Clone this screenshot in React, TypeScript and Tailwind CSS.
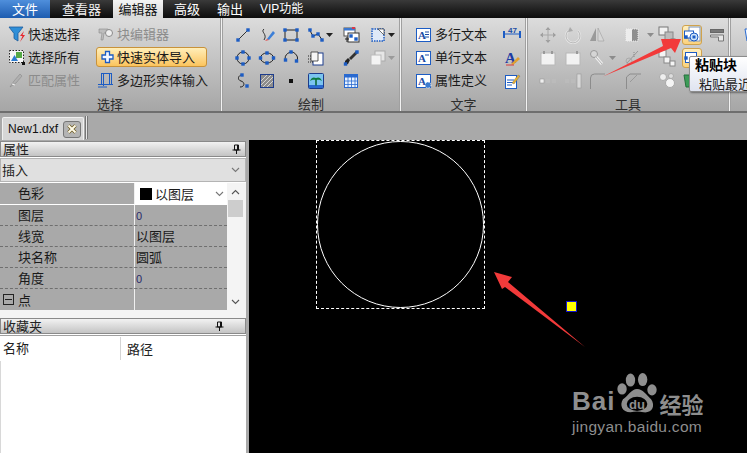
import type { ReactNode } from "react";

const BLUE = "#1c5cc4";

function Ic({ children, w = 18 }: { children?: ReactNode; w?: number }) {
  return (
    <svg width={w} height={18} viewBox={`0 0 ${w} 18`} className="shrink-0">
      {children}
    </svg>
  );
}

function H({ x, y, s = 3.4 }: { x: number; y: number; s?: number }) {
  return <rect x={x - s / 2} y={y - s / 2} width={s} height={s} fill={BLUE} />;
}

function Caret({ color = "#222" }: { color?: string }) {
  return (
    <svg width={7} height={4} viewBox="0 0 7 4" className="shrink-0">
      <path d="M0 0h7L3.500 4z" fill={color} />
    </svg>
  );
}

const gray = "#e6e6e6";
const grayD = "#8a8a8a";

function RibbonLabel({ children }: { children: ReactNode }) {
  return (
    <div className="h-[15px] shrink-0 text-center text-[13px] leading-[15px] text-[#2e2e2e]">
      {children}
    </div>
  );
}

function Separator() {
  return <div className="w-[3px] shrink-0 self-stretch border-x border-[#a0a0a0] bg-[#f2f2f2]" />;
}

function SelectItem({
  icon,
  label,
  dim,
  active,
}: {
  icon: ReactNode;
  label: string;
  dim?: boolean;
  active?: boolean;
}) {
  return (
    <div
      className={
        active
          ? "flex h-[20px] items-center whitespace-nowrap rounded-[3px] border border-[#c8923a] bg-gradient-to-b from-[#ffeeb8] to-[#fbc45c] pl-[2px] text-[13px] text-[#1a1a1a]"
          : "flex h-[20px] items-center whitespace-nowrap pl-[1px] text-[13px] " +
            (dim ? "text-[#8c8c8c]" : "text-[#1a1a1a]")
      }
    >
      {icon}
      <span className={active ? "" : "ml-[2px]"}>{label}</span>
    </div>
  );
}

function SelectGroup() {
  return (
    <div className="flex w-[220px] shrink-0 flex-col pt-[6px]">
      <div className="grid h-[72px] shrink-0 grid-cols-[89px_111px] content-start gap-y-[3px] pl-[7px]">
        <SelectItem
          label="快速选择"
          icon={
            <Ic>
              <path d="M1 2h14l-5 6.500V16l-4-2.500V8.500z" fill="#2f8fd8" stroke="#1c5c9c" strokeWidth=".8" />
              <path d="M16 6l-4 5h2.500L12 17l5-7h-2.500z" fill="#e8252c" />
            </Ic>
          }
        />
        <SelectItem
          dim
          label="块编辑器"
          icon={
            <Ic>
              <path d="M2 4h9v4H7l-1 7H4l1-7H2z" fill="#bdbdbd" stroke={grayD} strokeWidth=".6" />
              <circle cx="12" cy="8" r="3.500" fill="#efefef" stroke={grayD} />
            </Ic>
          }
        />
        <SelectItem
          label="选择所有"
          icon={
            <Ic>
              <rect x="1.500" y="2.500" width="14" height="12" fill="#f6f6f6" stroke="#222" strokeDasharray="1.500 1.500" />
              <rect x="8" y="4" width="6" height="6" fill="#55a845" />
              <path d="M3 13l3.500-6 3.500 6z" fill="#2b7bd0" />
              <rect x="14" y="14" width="3" height="3" fill="#111" />
            </Ic>
          }
        />
        <SelectItem
          active
          label="快速实体导入"
          icon={
            <Ic>
              <path d="M6.500 3.500h4v3.500H14v4h-3.500V14.500h-4V11H3V7h3.500z" fill="#f5f8ff" stroke={BLUE} strokeWidth="1.300" />
            </Ic>
          }
        />
        <SelectItem
          dim
          label="匹配属性"
          icon={
            <Ic>
              <path d="M2 16l4-6 6-7 2 2-6 7z" fill="#b0b0b0" stroke={grayD} strokeWidth=".6" />
              <path d="M4 13l3 1" stroke="#eee" />
            </Ic>
          }
        />
        <SelectItem
          label="多边形实体输入"
          icon={
            <Ic>
              <rect x="4.500" y="2.500" width="10" height="11" fill="none" stroke={BLUE} />
              <path d="M1 13.500h15M1 16h9M6.500 2v13M12.500 2v11" stroke={BLUE} />
            </Ic>
          }
        />
      </div>
      <RibbonLabel>选择</RibbonLabel>
    </div>
  );
}

const drawIcons: ReactNode[] = [
  <Ic key="a"><path d="M4 14L14 4" stroke="#333" /><H x={4} y={14} /><H x={14} y={4} /></Ic>,
  <Ic key="b"><path d="M6 3c-4 3 4 5 0 11" fill="none" stroke="#333" /><path d="M9 13l6-8 2 2-6 7z" fill="#3c7fd8" /><path d="M7 15l2-2 2 1z" fill="#e04848" /></Ic>,
  <Ic key="c"><rect x="3" y="4" width="12" height="10" fill="none" stroke="#222" /><H x={3} y={4} /><H x={15} y={4} /><H x={3} y={14} /><H x={15} y={14} /></Ic>,
  <div key="d" className="flex items-center gap-[1px]"><Ic><path d="M2 3l4 7 5-2 5 7" fill="none" stroke="#222" /><H x={3} y={4} /><H x={6} y={10} /><H x={11} y={8} /><H x={15} y={14} /></Ic><Caret /></div>,
  <Ic key="e"><rect x="2" y="2" width="11" height="8" fill="#fff" stroke="#555" /><rect x="2" y="2" width="11" height="2.500" fill="#3c78d0" /><rect x="10" y="1" width="3" height="2" fill="#d8394a" /><rect x="6" y="7" width="11" height="9" fill="#fff" stroke="#333" /><H x={9} y={10} /><H x={14} y={13} /><path d="M3 13h4M5 11v5" stroke="#222" /></Ic>,
  <div key="f" className="flex items-center gap-[1px]"><Ic><rect x="3" y="3" width="12" height="12" fill="#dfe9f8" stroke={BLUE} strokeDasharray="1.500 1" strokeWidth="1.500" /><path d="M9 3h6v6z" fill="#fff" stroke="#333" strokeWidth=".7" /></Ic><Caret /></div>,
  <Ic key="g"><circle cx="9" cy="9" r="6" fill="none" stroke="#222" /><H x={9} y={3} /><H x={3} y={9} /><H x={15} y={9} /><H x={9} y={15} /></Ic>,
  <Ic key="h"><ellipse cx="9" cy="9" rx="6.500" ry="5" fill="none" stroke="#222" /><H x={9} y={4} /><H x={2.500} y={9} /><H x={15.500} y={9} /><H x={9} y={14} /></Ic>,
  <Ic key="i"><path d="M4 12A6 6 0 1 1 14 13" fill="none" stroke="#222" /><H x={3.500} y={11} /><H x={9} y={3} /><H x={14.500} y={12} /></Ic>,
  <Ic key="j"><rect x="6" y="4" width="10" height="12" fill="#fff" stroke="#1c3c8c" /><path d="M1 7h6M1 10h6M1 13h6" stroke="#222" strokeDasharray="1 1" /><path d="M4 3h7v9H4z" fill="#f5f5f5" stroke="#333" strokeWidth=".8" /></Ic>,
  <Ic key="k"><path d="M3 16l3-1 2-4-2-2-3 3z" fill="#222" /><path d="M7 9l7-7 2 2-7 7z" fill="#333" /><H x={15} y={3} /><H x={3.500} y={15} /></Ic>,
  <div key="l" className="flex items-center gap-[1px]"><Ic><rect x="6" y="2" width="10" height="10" fill={gray} stroke="#aaa" /><rect x="2" y="6" width="10" height="10" fill="#f3f3f3" stroke="#bbb" /></Ic><Caret color="#9a9a9a" /></div>,
  <Ic key="m"><path d="M6 15c5 0 5-5 1-6s-3-6 1-6" fill="none" stroke="#222" /><H x={8} y={3} /><H x={13} y={14} /></Ic>,
  <Ic key="n"><rect x="2.500" y="2.500" width="13" height="13" fill="#8c8c8c" stroke="#1c3c8c" /><path d="M3 9l6-6M3 13l10-10M5 15L15 5M9 15l6-6" stroke="#d4d4d4" /></Ic>,
  <Ic key="o"><rect x="7" y="7" width="4" height="4" fill="#111" /></Ic>,
  <Ic key="p"><rect x="1.500" y="1.500" width="15" height="15" rx="1" fill="#7cc4f0" stroke="#1c3c8c" /><rect x="2" y="13" width="14" height="3" fill="#2a6ad0" /><path d="M9 6.500v7" stroke="#0c6a3a" strokeWidth="1.600" /><path d="M3 9c1.500-4 4-4 6-3 2-1 4.500-1 6 3-2-1.500-4-1.500-6-1-2-.5-4-.5-6 1z" fill="#0c7a40" /></Ic>,
  <Ic key="q"><rect x="2.500" y="2.500" width="13" height="13" fill="#eaf3ff" stroke="#2a6ad0" /><rect x="2.500" y="2.500" width="13" height="3" fill="#2a6ad0" /><path d="M2.500 9h13M2.500 12.500h13M6 3v12M9.500 3v12M13 3v12" stroke="#2a6ad0" strokeWidth=".8" /></Ic>,
];

function DrawGroup() {
  return (
    <div className="flex w-[176px] shrink-0 flex-col pt-[8px]">
      <div className="grid h-[70px] shrink-0 grid-cols-[24px_24px_25px_35px_27px_26px] content-start gap-y-[5px] pl-[11px]">
        {drawIcons.map((icon, i) => (
          <div key={i} className="flex h-[18px] items-center">
            {icon}
          </div>
        ))}
      </div>
      <RibbonLabel>绘制</RibbonLabel>
    </div>
  );
}

function TextIcon({ children }: { children?: ReactNode }) {
  return (
    <Ic>
      <rect x="1.500" y="2.500" width="14" height="13" fill="#fff" stroke={BLUE} />
      <text x="3" y="13" fontSize="11" fontWeight="700" fontFamily="Liberation Serif" fill="#1c4ca4">A</text>
      {children}
    </Ic>
  );
}

function TextGroup() {
  const rows: [string, ReactNode, ReactNode][] = [
    [
      "多行文本",
      <TextIcon key="a"><path d="M10 6h4M10 8.500h4M10 11h4" stroke="#1c4ca4" /></TextIcon>,
      <Ic key="a2"><path d="M1 8h16" stroke={BLUE} /><path d="M1 5v7M17 5v7" stroke={BLUE} strokeWidth="2" /><text x="5" y="7" fontSize="8" fontWeight="700" fontFamily="Liberation Sans" fill="#1c4ca4">47</text></Ic>,
    ],
    [
      "单行文本",
      <TextIcon key="b"><path d="M10 6h4" stroke="#1c4ca4" /></TextIcon>,
      <Ic key="b2"><text x="2" y="14" fontSize="15" fontWeight="700" fontFamily="Liberation Serif" fill="#1c3ca4">A</text><path d="M8 15l7-7 2 2-7 6z" fill="#e0a030" /><path d="M3 16h8" stroke="#d83838" /></Ic>,
    ],
    [
      "属性定义",
      <TextIcon key="c"><circle cx="13" cy="13" r="3" fill="#3c7cd0" stroke="#fff" strokeDasharray="1 1" /></TextIcon>,
      <Ic key="c2"><rect x="2.500" y="3.500" width="11" height="13" fill="#fff" stroke={BLUE} /><path d="M4 8h7M4 10.500h7M4 13h5" stroke={BLUE} /><path d="M9 11l6-8 2 1-6 8z" fill="#e8b030" stroke="#666" strokeWidth=".4" /></Ic>,
    ],
  ];
  return (
    <div className="flex w-[123px] shrink-0 flex-col pt-[8px]">
      <div className="flex h-[70px] shrink-0 flex-col gap-[5px] pl-[13px] pr-[4px]">
        {rows.map(([label, icon, right]) => (
          <div key={label} className="flex h-[18px] items-center text-[13px] text-[#1a1a1a]">
            {icon}
            <span className="-mt-[2px] ml-[2px] w-[73px] whitespace-nowrap">{label}</span>
            {right}
          </div>
        ))}
      </div>
      <RibbonLabel>文字</RibbonLabel>
    </div>
  );
}

const toolIcons: ReactNode[] = [
  <Ic key="a"><path d="M9 1l2.500 3h-5zM9 17l-2.500-3h5zM1 9l3-2.500v5zM17 9l-3 2.500v-5z" fill="#9c9c9c" /><path d="M9 3v12M3 9h12" stroke="#a8a8a8" /></Ic>,
  <Ic key="b"><path d="M4 5A7 7 0 1 0 14 5" fill="none" stroke={gray} strokeWidth="2.500" /><path d="M4 5A7 7 0 1 0 14 5" fill="none" stroke="#999" strokeWidth=".6" /><path d="M6 1l-2 5 5-1z" fill="#aaa" /></Ic>,
  <Ic key="c"><path d="M8 2L2 15h6z" fill="#9a9a9a" /><path d="M10 2l6 13h-6z" fill="#d6d6d6" stroke="#a0a0a0" strokeWidth=".6" /></Ic>,
  <div key="d" className="flex items-center gap-[5px]"><Ic><rect x="2" y="3" width="12" height="12" fill="#8f8f8f" /><rect x="2" y="3" width="6" height="12" fill="#ededed" /><path d="M2 3h12v12H2z" fill="none" stroke="#efefef" strokeDasharray="1 1" /></Ic><Caret color="#8c8c8c" /></div>,
  <Ic key="e"><rect x="1" y="1" width="9" height="8" fill="#f1f1f1" stroke="#777" /><rect x="7" y="6" width="8" height="8" fill="#bbb" stroke="#888" /><rect x="13" y="13" width="4" height="4" fill="#f1f1f1" stroke="#777" /></Ic>,
  <div key="f" className="-mt-[1px] h-[20px] w-[20px] rounded-[3px] border border-[#d0a24c] bg-gradient-to-b from-[#ffefbe] to-[#fbd27c]"><Ic><rect x="6" y="1" width="11" height="14" fill="#fff" stroke="#7a94bc" /><rect x="1.500" y="5" width="9" height="7" fill="#fff" stroke={BLUE} /><circle cx="11" cy="11" r="4" fill="#cfe4fa" stroke={BLUE} /><H x={3} y={11} /><H x={11} y={11} s={3} /></Ic></div>,
  <Ic key="g"><rect x="2.500" y="3.500" width="13" height="3" fill="#777" stroke="#666" /><path d="M2.500 9h13v6h-5V11h-8z" fill="#e6e6e6" stroke="#777" /></Ic>,
  <Ic key="h"><rect x="2" y="4" width="14" height="12" fill="#f2f2f2" stroke="#b8b8b8" /><rect x="4" y="2" width="2" height="3" fill="#999" /><rect x="12" y="2" width="2" height="3" fill="#999" /></Ic>,
  <Ic key="i"><rect x="2" y="4" width="14" height="12" fill="#f2f2f2" stroke="#b8b8b8" /><rect x="12" y="2" width="2" height="3" fill="#999" /></Ic>,
  <div key="j" className="flex items-center gap-[3px]"><Ic><circle cx="6" cy="5" r="3.500" fill="#d5d5d5" stroke="#999" /><path d="M8 8l6 7" stroke="#eee" strokeWidth="3" /><path d="M8 8l6 7" stroke="#999" strokeWidth=".7" /></Ic><Caret color="#8c8c8c" /></div>,
  <Ic key="k"><path d="M3 14L14 2" stroke="#999" /><circle cx="5" cy="12" r="3" fill="none" stroke="#aaa" /><path d="M10 3v6" stroke="#888" strokeDasharray="1 1" /></Ic>,
  <Ic key="l"><rect x="1" y="1" width="7" height="7" fill="#f4f4f4" stroke="#888" /><rect x="6" y="8" width="6" height="6" fill="#f4f4f4" stroke="#888" /><rect x="12" y="12" width="5" height="5" fill="#f4f4f4" stroke="#888" /></Ic>,
  <div key="m" className="-mt-[1px] h-[20px] w-[20px] rounded-[3px] border border-[#d0a24c] bg-gradient-to-b from-[#ffefbe] to-[#fbd27c]"><Ic><rect x="2.500" y="3.500" width="11" height="10" fill="#fff" stroke={BLUE} /><H x={3} y={9} /></Ic></div>,
  <Ic key="n" />,
  <Ic key="o"><rect x="1" y="7" width="4" height="4" fill="#efefef" stroke="#999" strokeWidth=".6" /><rect x="7" y="7" width="4" height="4" fill="#bbb" /><rect x="13" y="7" width="4" height="4" fill="#bbb" /></Ic>,
  <Ic key="p"><rect x="1" y="7" width="4" height="4" fill="#bbb" /><rect x="7" y="7" width="4" height="4" fill="#bbb" /><rect x="13" y="2" width="4" height="14" fill="#d8d8d8" stroke="#999" strokeWidth=".6" /></Ic>,
  <Ic key="q"><path d="M2.500 17V6q0-4 4-4H17" fill="none" stroke="#8c8c8c" /><path d="M7 6l4-3" stroke="#bbb" /></Ic>,
  <Ic key="s"><path d="M2.500 17V5L6 2h11" fill="none" stroke="#8c8c8c" /><path d="M6 10l7-7" stroke="#999" /></Ic>,
  <Ic key="t"><circle cx="5" cy="5" r="3.500" fill="#eee" stroke="#aaa" /><circle cx="12" cy="11" r="4.500" fill="#f5f5f5" stroke="#aaa" /><circle cx="13" cy="4" r="2.500" fill="#ddd" stroke="#aaa" /></Ic>,
  <Ic key="u"><path d="M2 3h14l-2 12H4z" fill="#3d9c58" stroke="#26703c" /></Ic>,
];

function ToolGroup() {
  return (
    <div className="flex w-[200px] shrink-0 flex-col pt-[8px]">
      <div className="grid h-[70px] shrink-0 grid-cols-[25px_24px_36px_34px_24px_26px_18px] content-start gap-y-[5px] pl-[11px]">
        {toolIcons.map((icon, i) => (
          <div key={i} className="flex h-[18px] items-center">
            {icon}
          </div>
        ))}
      </div>
      <RibbonLabel>工具</RibbonLabel>
    </div>
  );
}

function Ribbon() {
  return (
    <div className="flex h-[95px] overflow-hidden border-b-2 border-[#6e6e6e] bg-gradient-to-b from-[#dcdcdc] to-[#a6a6a6]">
      <SelectGroup />
      <Separator />
      <DrawGroup />
      <Separator />
      <TextGroup />
      <Separator />
      <ToolGroup />
      <Separator />
      <div className="flex flex-col gap-[5px] pl-[12px] pt-[8px]">
        <Ic><path d="M2 3h14l-2 12H4z" fill="#eef5ff" stroke="#2a6ad0" /></Ic>
        <Ic><H x={6} y={6} /><H x={12} y={12} /></Ic>
      </div>
    </div>
  );
}

function MenuBar() {
  return (
    <div className="flex h-[18px] items-stretch bg-gradient-to-b from-[#3a3a3a] to-[#0c0c0c] text-[13px] leading-[18px] text-white">
      <div className="w-[50px] bg-gradient-to-b from-[#4f8fdc] to-[#1c5cb0] text-center">文件</div>
      <div className="w-[63px] pl-[12px] text-[#f0f0f0]">查看器</div>
      <div className="w-[50px] bg-gradient-to-b from-[#f4f4f4] to-[#d8d8d8] text-center text-[#111]">编辑器</div>
      <div className="w-[54px] pl-[11px]">高级</div>
      <div className="w-[43px]">输出</div>
      <div className="whitespace-nowrap font-['Liberation_Sans','Noto_Sans_CJK_SC',sans-serif] text-[12px]">VIP功能</div>
    </div>
  );
}

function DocTabs() {
  return (
    <div className="flex h-[27px] items-end bg-[#a9a9a9] pl-[2px]">
      <div className="flex h-[23px] w-[82px] items-center justify-between rounded-t-[2px] border border-b-0 border-[#f0f0f0] bg-[#d6d6d6] pl-[5px] pr-[2px] font-['Liberation_Sans',sans-serif] text-[12px] text-[#111]">
        New1.dxf
        <span className="flex h-[17px] w-[18px] items-center justify-center rounded-[3px] border border-[#777] bg-[#b4b4b4]">
          <svg width="10" height="10" viewBox="0 0 10 10">
            <path d="M1.500 1.500l7 7M8.500 1.500l-7 7" stroke="#6d5a20" strokeWidth="3.400" />
            <path d="M1.500 1.500l7 7M8.500 1.500l-7 7" stroke="#fffbe8" strokeWidth="2" />
          </svg>
        </span>
      </div>
      <div className="mb-[1px] ml-[1px] h-[23px] w-[3px] border-x border-[#777] bg-[#e8e8e8]" />
    </div>
  );
}

function Pin() {
  return (
    <svg width="9" height="10" viewBox="0 0 9 10">
      <path d="M2.500 1h4v5h-4zM0.500 6h8M4.500 6v4" fill="none" stroke="#111" />
      <path d="M5 1h1.500v5H5z" fill="#111" />
    </svg>
  );
}

function PaneHeader({ title, pinRight }: { title: string; pinRight: string }) {
  return (
    <div className="flex h-[16px] items-center justify-between border border-[#8a8a8a] bg-gradient-to-b from-[#f2f2f2] to-[#c4c4c4] pl-[2px] text-[13px] leading-[14px] text-[#222]">
      {title}
      <span className={pinRight}>
        <Pin />
      </span>
    </div>
  );
}

function Chevron({ up, color = "#777" }: { up?: boolean; color?: string }) {
  return (
    <svg width="9" height="6" viewBox="0 0 9 6">
      <path d={up ? "M1 5l3.500-3.500L8 5" : "M1 1l3.500 3.500L8 1"} fill="none" stroke={color} strokeWidth="1.100" />
    </svg>
  );
}

const propRows = [
  { name: "图层", value: "0" },
  { name: "线宽", value: "以图层" },
  { name: "块名称", value: "圆弧" },
  { name: "角度", value: "0" },
];

function Properties() {
  return (
    <div className="flex h-[127px] bg-[#f4f4f4]">
      <div className="w-[227px] bg-[#a9a9a9] text-[13px] text-[#1a1a1a]">
        <div className="flex h-[22px] border-b border-white">
          <div className="w-[134px] pl-[18px] leading-[20px]">色彩</div>
          <div className="flex h-[21px] flex-1 items-center border-l border-[#f0f0f0] bg-white pl-[5px] pr-[3px]">
            <span className="h-[12px] w-[12px] bg-black" />
            <span className="ml-[3px] flex-1">以图层</span>
            <Chevron />
          </div>
        </div>
        {propRows.map((r) => (
          <div key={r.name} className="flex h-[21px] border-b border-dashed border-[#6f6f6f] leading-[19px]">
            <div className="w-[134px] pl-[18px]">{r.name}</div>
            <div className="flex-1 border-l border-[#f0f0f0] pl-[1px]">
              {r.value === "0" ? <span className="font-['Liberation_Sans',sans-serif] text-[11px] text-[#2a2a6a]">0</span> : r.value}
            </div>
          </div>
        ))}
        <div className="flex h-[21px] leading-[19px]">
          <div className="flex w-[134px] items-center pl-[3px]">
            <span className="flex h-[11px] w-[11px] items-center justify-center border border-[#222]">
              <span className="h-[1px] w-[7px] bg-[#222]" />
            </span>
            <span className="ml-[4px]">点</span>
          </div>
          <div className="flex-1 border-l border-[#f0f0f0]" />
        </div>
      </div>
      <div className="flex w-[17px] flex-col items-center">
        <div className="flex h-[17px] items-center justify-center">
          <Chevron up color="#555" />
        </div>
        <div className="h-[17px] w-[15px] bg-[#cdcdcd]" />
        <div className="flex-1" />
        <div className="flex h-[16px] items-center justify-center">
          <Chevron color="#555" />
        </div>
      </div>
    </div>
  );
}

function LeftPanel() {
  return (
    <div className="flex w-[249px] shrink-0 flex-col bg-[#a9a9a9] pr-[3px] pt-[1px]">
      <div className="flex flex-1 flex-col bg-white">
        <PaneHeader title="属性" pinRight="mr-[4px]" />
        <div className="mb-[1px] mt-[1px] flex h-[24px] items-center justify-between border border-[#b4b4b4] bg-[#e0e0e0] pl-[1px] pr-[5px] text-[13px] text-[#222]">
          插入
          <Chevron />
        </div>
        <Properties />
        <div className="h-[8px] bg-[#f4f4f4]" />
        <PaneHeader title="收藏夹" pinRight="mr-[21px]" />
        <div className="mt-[1px] flex h-[26px] border-t border-[#a0a0a0] text-[13px] leading-[23px] text-[#222]">
          <div className="w-[120px] pl-[3px]">名称</div>
          <div className="my-[1px] flex-1 border-l border-[#d4d4d4] pl-[6px]">路径</div>
        </div>
        <div className="flex-1 border-l border-[#d8d8d8]" />
      </div>
    </div>
  );
}

function Canvas() {
  return (
    <div className="relative flex-1 overflow-hidden bg-black">
      {/* selection box, circle, grip */}
      <div className="absolute left-[67px] top-0 h-[169px] w-[169px] border border-dashed border-white" />
      <div className="absolute left-[68px] top-[1px] h-[167px] w-[167px] rounded-full border border-white" />
      <div className="absolute left-[317px] top-[161px] h-[11px] w-[11px] border border-[#1414d0] bg-[#ffff00]" />
      {/* watermark */}
      <div className="absolute left-[323px] top-[233px] w-[140px] text-[#8e8e8e]">
        <div className="flex h-[44px] items-end">
          <span className="mb-[3px] font-['Liberation_Sans',sans-serif] text-[26px] font-bold leading-[26px] tracking-[1px]">Bai</span>
          <svg width="41" height="44" viewBox="0 0 43 47" className="ml-[2px] shrink-0">
            <ellipse cx="14" cy="7.500" rx="5" ry="7" fill="#8e8e8e" />
            <ellipse cx="27" cy="7" rx="5" ry="7" fill="#8e8e8e" />
            <ellipse cx="5" cy="17" rx="5" ry="6" fill="#8e8e8e" />
            <ellipse cx="37" cy="18" rx="5" ry="6" fill="#8e8e8e" />
            <path d="M21 17c6 0 10 6 15 11 5 7 1 15-8 14-5-1-9-1-14 0-9 0-12-8-8-14 5-3 9-11 15-11z" fill="#8e8e8e" />
            <ellipse cx="21" cy="33" rx="11" ry="7.500" fill="#000" />
            <text x="21" y="38" textAnchor="middle" fontSize="14" fontWeight="700" fontFamily="Liberation Sans" fill="#8e8e8e">du</text>
          </svg>
          <span className="ml-[1px] mb-[1px] whitespace-nowrap text-[22px] font-bold leading-[26px]">经验</span>
        </div>
        <div className="mt-[1px] whitespace-nowrap font-['Liberation_Sans',sans-serif] text-[15.5px] leading-[18px] tracking-[0.3px]">
          jingyan.baidu.com
        </div>
      </div>
    </div>
  );
}

function Tooltip() {
  return (
    <div className="absolute left-[689px] top-[56px] h-[36px] w-[70px] rounded-[2px] border border-[#8c8c8c] bg-gradient-to-b from-[#ffffff] to-[#dfe4f0] pl-[5px] whitespace-nowrap text-[#222] shadow-[1px_1px_2px_rgba(0,0,0,0.4)]">
      <div className="h-[17px] text-[14px] font-bold leading-[15px] text-black">粘贴块</div>
      <div className="mt-[1px] h-[17px] pl-[4px] text-[13px] leading-[18px]">粘贴最近</div>
    </div>
  );
}

function RedArrows() {
  return (
    <svg width="747" height="453" viewBox="0 0 747 453" className="pointer-events-none absolute left-0 top-0">
      <path d="M603 76.500L663 46 661 39 681 39 675 53 671 48z" fill="#f23a3a" />
      <path d="M494 272L512 277 508 282 585 347 505 287 502 289z" fill="#f23a3a" />
    </svg>
  );
}

export default function App() {
  return (
    <div className="relative flex h-[453px] w-[747px] flex-col overflow-hidden bg-[#a9a9a9] font-['Noto_Sans_CJK_SC','Liberation_Sans',sans-serif]">
      <MenuBar />
      <Ribbon />
      <DocTabs />
      <div className="flex min-h-0 flex-1">
        <LeftPanel />
        <Canvas />
      </div>
      <RedArrows />
      <Tooltip />
    </div>
  );
}
